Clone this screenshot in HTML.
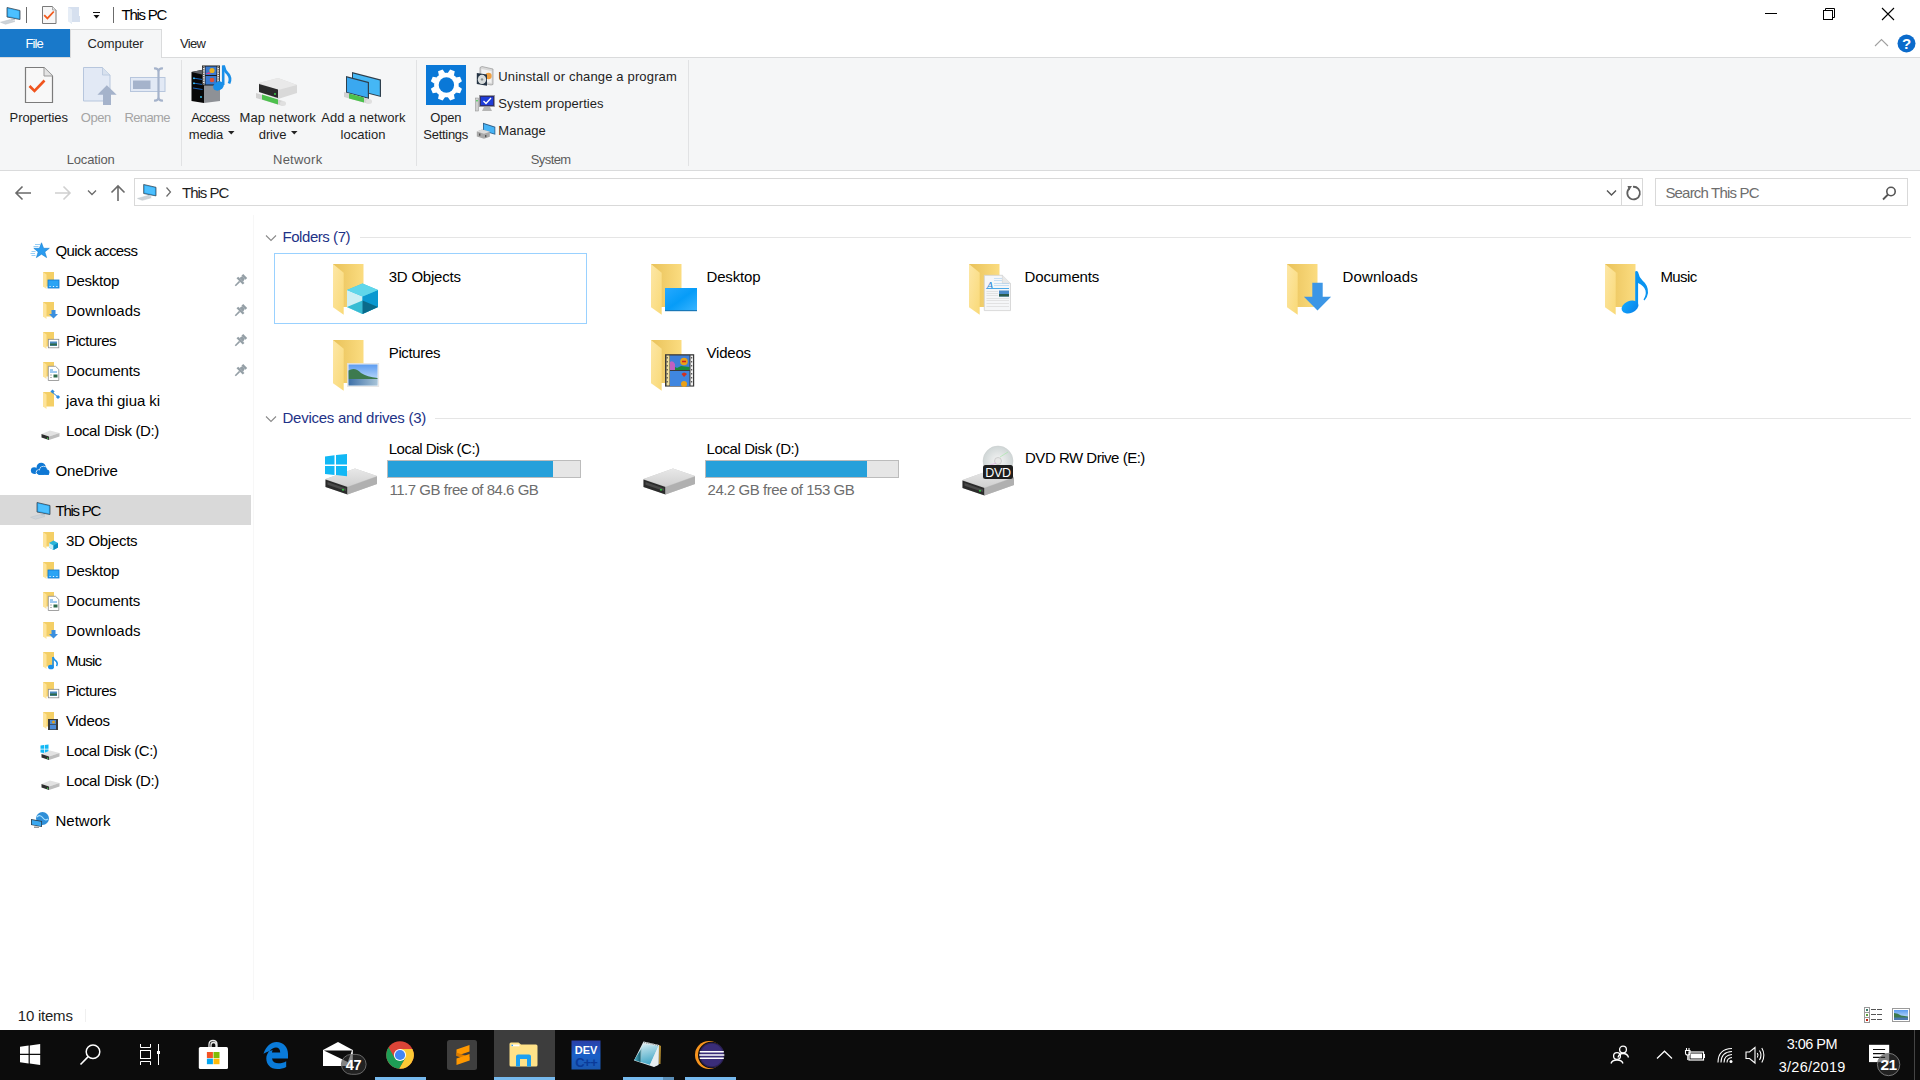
<!DOCTYPE html>
<html><head><meta charset="utf-8">
<style>
*{margin:0;padding:0;box-sizing:border-box}
html,body{width:1920px;height:1080px;overflow:hidden;background:#fff;font-family:"Liberation Sans",sans-serif;color:#000;position:relative}
.a{position:absolute}
.t{position:absolute;white-space:nowrap;line-height:1.15;font-family:"Liberation Sans",sans-serif}
svg{position:absolute;overflow:visible}
</style></head><body>
<svg style="left:0px;top:7px" width="22" height="20" viewBox="0 0 22 20"><g transform="scale(1.0)">
<polygon points="7,0.5 20,3.5 20,12.5 7,10" fill="#2aa7f0" stroke="#3d4a55" stroke-width="0.8"/>
<polygon points="8.2,1.8 18.8,4.3 18.8,11.3 8.2,9" fill="#4cc0ff"/>
<polygon points="11,11.5 15,12.2 15,13.5 11,12.8" fill="#b9c3cc"/>
<polygon points="0.5,15.2 10,12.6 15,14.5 5.5,17.2" fill="#cdd3d8" stroke="#bcc3c8" stroke-width="0.5"/>
</g></svg>
<div class="a" style="left:26px;top:7px;width:1px;height:16px;background:#6b6b6b"></div>
<svg style="left:42px;top:6px" width="15" height="18" viewBox="0 0 15 18"><path d="M0.5,0.5 H10.5 L14,4 V17.5 H0.5 Z" fill="#f7f7f7" stroke="#7a7a7a" stroke-width="1"/>
<path d="M10.5,0.5 V4 H14" fill="#e6e6e6" stroke="#9a9a9a" stroke-width="0.8"/>
<path d="M2.2,9.2 L5.4,12.4 L11.8,5.5" fill="none" stroke="#f25a1d" stroke-width="1.8"/></svg>
<svg style="left:68px;top:7px" width="13" height="18" viewBox="0 0 13 18"><polygon points="0,0 11,0 11,9 12,9 12,15 4,15 4,17 0,14" fill="#d6e0ef"/>
<polygon points="0,0 4,2.5 4,17 0,14" fill="#e6edf6"/></svg>
<div class="a" style="left:93px;top:12px;width:7px;height:1px;background:#111"></div>
<svg style="left:93px;top:15px" width="7" height="5" viewBox="0 0 7 5"><polygon points="0.5,0 6.5,0 3.5,3.5" fill="#111"/></svg>
<div class="a" style="left:113px;top:7px;width:1px;height:16px;background:#6b6b6b"></div>
<div class="t" style="left:121.50px;top:6.00px;font-size:15px;color:#000;letter-spacing:-1.250px;">This PC</div>
<div class="a" style="left:1765px;top:13px;width:12px;height:1px;background:#000"></div>
<svg style="left:1822px;top:7px" width="14" height="14" viewBox="0 0 14 14"><rect x="1.5" y="3.5" width="9" height="9" fill="none" stroke="#000" stroke-width="1"/><path d="M3.5,3.5 V1.5 H12.5 V10.5 H10.5" fill="none" stroke="#000" stroke-width="1"/></svg>
<svg style="left:1881px;top:7px" width="14" height="14" viewBox="0 0 14 14"><path d="M1,1 L13,13 M13,1 L1,13" stroke="#000" stroke-width="1.1"/></svg>
<div class="a" style="left:0px;top:29px;width:70px;height:28px;background:#1979ca"></div>
<div class="t" style="left:25.60px;top:37.00px;font-size:13px;color:#fff;letter-spacing:-0.933px;">File</div>
<div class="a" style="left:70px;top:29px;width:92px;height:29px;background:#f5f6f7;border:1px solid #dadbdc;border-bottom:none"></div>
<div class="t" style="left:87.50px;top:37.00px;font-size:13px;color:#262626;letter-spacing:-0.129px;">Computer</div>
<div class="t" style="left:180.00px;top:37.00px;font-size:13px;color:#262626;letter-spacing:-0.700px;">View</div>
<svg style="left:1874px;top:38px" width="15" height="9" viewBox="0 0 15 9"><path d="M1,8 L7.5,1.5 L14,8" fill="none" stroke="#a0a0a0" stroke-width="1.1"/></svg>
<svg style="left:1897px;top:34px" width="19" height="19" viewBox="0 0 19 19"><circle cx="9.5" cy="9.5" r="9" fill="#0b6bcb"/><text x="9.7" y="15.2" font-family="Liberation Sans" font-weight="bold" font-size="15" fill="#fff" text-anchor="middle">?</text></svg>
<div class="a" style="left:0px;top:57px;width:1920px;height:114px;background:#f5f6f7;border-top:1px solid #dadbdc;border-bottom:1px solid #dadbdc"></div>
<div class="a" style="left:71px;top:57px;width:90px;height:2px;background:#f5f6f7"></div>
<div class="a" style="left:181px;top:60px;width:1px;height:106px;background:#e1e2e4"></div>
<div class="a" style="left:416px;top:60px;width:1px;height:106px;background:#e1e2e4"></div>
<div class="a" style="left:688px;top:60px;width:1px;height:106px;background:#e1e2e4"></div>
<svg style="left:24px;top:66px" width="30" height="38" viewBox="0 0 30 38"><path d="M1.5,1.5 H20 L28.5,10 V36.5 H1.5 Z" fill="#f8f8f8" stroke="#7b7b7b" stroke-width="1.2"/>
<path d="M20,1.5 V10 H28.5" fill="#e4e4e4" stroke="#9b9b9b" stroke-width="1"/>
<path d="M5.5,20 L10.5,25 L20.5,14.5" fill="none" stroke="#f0541e" stroke-width="2.6"/></svg>
<svg style="left:82px;top:66px" width="36" height="40" viewBox="0 0 36 40"><path d="M1.5,1.5 H20.5 L28,9 V35 H1.5 Z" fill="#e2e9f5" stroke="#b7c6dd" stroke-width="1"/>
<path d="M20.5,1.5 V9 H28" fill="#d8e1ee" stroke="#b7c6dd" stroke-width="0.8"/>
<polygon points="24.8,19.3 34.7,28.8 29,28.8 29,38.9 21,38.9 21,28.8 15.4,28.8" fill="#a5b3cb"/></svg>
<svg style="left:129px;top:67px" width="38" height="36" viewBox="0 0 38 36"><rect x="1.5" y="10.5" width="34.5" height="14" fill="#e2e9f5" stroke="#b7c6dd" stroke-width="1"/>
<rect x="4" y="13.5" width="17.5" height="8.5" fill="#a5b3cb"/>
<path d="M25,1.5 Q29.5,1 29.5,5 V30 Q29.5,34 25,33.5 M34,1.5 Q29.5,1 29.5,5 M34,33.5 Q29.5,34 29.5,30" fill="none" stroke="#a5b3cb" stroke-width="2.2"/></svg>
<div class="t" style="left:9.60px;top:111.00px;font-size:13px;color:#1e1e1e;letter-spacing:-0.100px;">Properties</div>
<div class="t" style="left:80.70px;top:111.00px;font-size:13px;color:#a4a4a4;letter-spacing:-0.400px;">Open</div>
<div class="t" style="left:124.50px;top:111.00px;font-size:13px;color:#a4a4a4;letter-spacing:-0.640px;">Rename</div>
<div class="t" style="left:66.70px;top:153.00px;font-size:13px;color:#5c5c5c;letter-spacing:-0.157px;">Location</div>
<svg style="left:190px;top:64px" width="42" height="42" viewBox="0 0 42 42"><polygon points="1.5,8 14,5.5 14,39 1.5,37" fill="#080808"/>
<polygon points="14,5.5 30,9 30,37 14,39" fill="#8e9196"/>
<polygon points="1.5,8 14,5.5 30,9 16,11.5" fill="#5e6166"/>
<path d="M3,14 L12.5,15.5 M3,19 L12.5,20.5 M3,24 L12.5,25.5" stroke="#1d6fd0" stroke-width="0.9"/>
<circle cx="4" cy="14.3" r="0.9" fill="#3fd0ff"/><circle cx="4" cy="19.3" r="0.9" fill="#3fd0ff"/><circle cx="11" cy="33" r="0.9" fill="#3fd0ff"/>
<rect x="12" y="1.5" width="18" height="20" fill="#1a1a1a"/>
<rect x="12.8" y="2.5" width="2" height="18" fill="#e8e8e8"/><rect x="27.2" y="2.5" width="2" height="18" fill="#e8e8e8"/>
<path d="M13.8,3 V20.5 M28.2,3 V20.5" stroke="#1a1a1a" stroke-width="1" stroke-dasharray="1 1.3"/>
<rect x="15.5" y="2.5" width="11" height="8.5" fill="#3a7ad0"/><rect x="15.5" y="12" width="11" height="8.5" fill="#3a7ad0"/>
<circle cx="22" cy="6.5" r="2.6" fill="#e8b020"/><circle cx="22" cy="16" r="2.3" fill="#e05030"/><path d="M15.5,10 L19,8 L21,10" fill="#d04090"/>
<path d="M33.2,1.5 V21" stroke="#1a8fe8" stroke-width="2.6"/>
<path d="M33.5,1.5 Q34.5,7 38,10 Q41.5,14 39,19.5" fill="none" stroke="#1a8fe8" stroke-width="2.8"/>
<ellipse cx="28.5" cy="22" rx="5.6" ry="4.3" fill="#1a8fe8" transform="rotate(-28 28.5 22)"/></svg>
<svg style="left:256px;top:76px" width="44" height="30" viewBox="0 0 44 30"><polygon points="3,7 22,2 41,9 41,17 22,23 3,16" fill="#d9d9d9"/>
<polygon points="3,7 22,2 41,9 22,14" fill="#e9e9e9"/>
<polygon points="3,8 22,13.5 22,22 3,16" fill="#2a2a2a"/>
<circle cx="19" cy="18" r="1" fill="#3cd04a"/>
<polygon points="0,17 27,25 27,30 0,22" fill="#d2d2d2"/>
<polygon points="6,18.5 22,23.5 22,28.5 6,23.5" fill="#4dc04d"/>
<ellipse cx="27" cy="27.5" rx="3" ry="2.5" fill="#e0e0e0"/></svg>
<svg style="left:344px;top:72px" width="40" height="34" viewBox="0 0 40 34"><polygon points="8,0 37,7.5 37,25 8,17.5" fill="#2e3f4d"/>
<polygon points="9,1.5 35.8,8.5 35.8,23.8 9,16.8" fill="#45b7f5"/>
<polygon points="2,4 25,10 25,27 2,21" fill="#2e3f4d"/>
<polygon points="3,5.5 23.8,11 23.8,25.6 3,20" fill="#3aa8f0"/>
<polygon points="0,20 25,27 25,32 0,25" fill="#d2d2d2"/>
<polygon points="5,21.5 20,25.5 20,30.5 5,26.5" fill="#4dc04d"/>
<ellipse cx="25" cy="29.5" rx="3" ry="2.5" fill="#e0e0e0"/></svg>
<div class="t" style="left:191.30px;top:111.00px;font-size:13px;color:#1e1e1e;letter-spacing:-0.640px;">Access</div>
<div class="t" style="left:188.80px;top:128.00px;font-size:13px;color:#1e1e1e;letter-spacing:-0.250px;">media</div>
<svg style="left:228px;top:131px" width="7" height="4" viewBox="0 0 7 4"><polygon points="0,0 6.5,0 3.25,3.5" fill="#222"/></svg>
<div class="t" style="left:239.40px;top:111.00px;font-size:13px;color:#1e1e1e;letter-spacing:0.190px;">Map network</div>
<div class="t" style="left:258.80px;top:128.00px;font-size:13px;color:#1e1e1e;letter-spacing:-0.125px;">drive</div>
<svg style="left:290.5px;top:131px" width="7" height="4" viewBox="0 0 7 4"><polygon points="0,0 6.5,0 3.25,3.5" fill="#222"/></svg>
<div class="t" style="left:321.30px;top:111.00px;font-size:13px;color:#1e1e1e;letter-spacing:0.083px;">Add a network</div>
<div class="t" style="left:340.60px;top:128.00px;font-size:13px;color:#1e1e1e;letter-spacing:0.000px;">location</div>
<div class="t" style="left:273.00px;top:153.00px;font-size:13px;color:#5c5c5c;letter-spacing:0.250px;">Network</div>
<svg style="left:425.5px;top:65px" width="40" height="40" viewBox="0 0 40 40"><rect width="40" height="40" fill="#0a78d7"/>
<g transform="translate(20.4 20)" fill="#fff"><circle r="12.3"/><polygon points="-3.3,-11.5 3.3,-11.5 2.5,-15.8 -2.5,-15.8" transform="rotate(22.5)"/><polygon points="-3.3,-11.5 3.3,-11.5 2.5,-15.8 -2.5,-15.8" transform="rotate(67.5)"/><polygon points="-3.3,-11.5 3.3,-11.5 2.5,-15.8 -2.5,-15.8" transform="rotate(112.5)"/><polygon points="-3.3,-11.5 3.3,-11.5 2.5,-15.8 -2.5,-15.8" transform="rotate(157.5)"/><polygon points="-3.3,-11.5 3.3,-11.5 2.5,-15.8 -2.5,-15.8" transform="rotate(202.5)"/><polygon points="-3.3,-11.5 3.3,-11.5 2.5,-15.8 -2.5,-15.8" transform="rotate(247.5)"/><polygon points="-3.3,-11.5 3.3,-11.5 2.5,-15.8 -2.5,-15.8" transform="rotate(292.5)"/><polygon points="-3.3,-11.5 3.3,-11.5 2.5,-15.8 -2.5,-15.8" transform="rotate(337.5)"/><circle r="7.7" fill="#0a78d7"/></g></svg>
<div class="t" style="left:430.30px;top:111.00px;font-size:13px;color:#1e1e1e;letter-spacing:-0.200px;">Open</div>
<div class="t" style="left:423.30px;top:128.00px;font-size:13px;color:#1e1e1e;letter-spacing:-0.286px;">Settings</div>
<svg style="left:476px;top:66px" width="18" height="21" viewBox="0 0 18 21"><polygon points="4,1.5 6,0.5 17,3 17,18.5 15,19 4,16.5" fill="#d8d8d8" stroke="#8a8a8a" stroke-width="0.6"/>
<polygon points="5.5,3 15.5,5 15.5,17 5.5,15" fill="#f2f2f2"/>
<circle cx="12.5" cy="10" r="3.2" fill="#f0a040"/>
<polygon points="0.8,7 11,8.5 11,19.8 0.8,18" fill="#253444"/>
<ellipse cx="6" cy="13.4" rx="4.2" ry="4.6" fill="#d8dcdc"/><circle cx="6" cy="13.4" r="1.2" fill="#8a9090"/></svg>
<div class="t" style="left:498.30px;top:70.00px;font-size:13px;color:#1e1e1e;letter-spacing:0.157px;">Uninstall or change a program</div>
<svg style="left:475px;top:95px" width="21" height="18" viewBox="0 0 21 18"><rect x="4.5" y="0.5" width="15" height="11" fill="#2d2d6e" stroke="#9a9a9a" stroke-width="0.8"/>
<rect x="6" y="2" width="12" height="8" fill="#1e3cd8"/>
<path d="M8.5,6 L11,8.5 L16,3" fill="none" stroke="#fff" stroke-width="1.3"/>
<polygon points="9,12 15,12 17,16 7,16" fill="#b5b5b5"/>
<rect x="0.5" y="3" width="3" height="13" fill="#d0d0d0" stroke="#8a8a8a" stroke-width="0.5"/>
<rect x="1.3" y="5" width="1.4" height="1.4" fill="#3ad04a"/></svg>
<div class="t" style="left:498.30px;top:97.00px;font-size:13px;color:#1e1e1e;letter-spacing:0.025px;">System properties</div>
<svg style="left:475.5px;top:122px" width="20" height="18" viewBox="0 0 20 18"><polygon points="7,0.8 19.3,4.8 19.3,12.8 7,9" fill="#2f5f88"/>
<polygon points="7.8,2 18.5,5.5 18.5,11.8 7.8,8.3" fill="#46b4f6"/>
<polygon points="0.8,9.5 6,7.5 13.8,9.8 13.8,14.8 8,16.7 0.8,14.5" fill="#a8a8a8"/>
<polygon points="0.8,9.5 6,7.5 13.8,9.8 8,11.8" fill="#dcdcdc"/>
<rect x="3" y="11.5" width="1.4" height="2.2" fill="#555"/><rect x="9" y="13" width="1.4" height="2.2" fill="#555"/></svg>
<div class="t" style="left:498.30px;top:124.00px;font-size:13px;color:#1e1e1e;letter-spacing:0.100px;">Manage</div>
<div class="t" style="left:530.80px;top:153.00px;font-size:13px;color:#5c5c5c;letter-spacing:-0.600px;">System</div>
<svg style="left:14px;top:185px" width="20" height="16" viewBox="0 0 20 16"><path d="M2,8 H17 M8.5,1.5 L2,8 L8.5,14.5" fill="none" stroke="#6a6a6a" stroke-width="1.6"/></svg>
<svg style="left:53px;top:185px" width="20" height="16" viewBox="0 0 20 16"><path d="M2,8 H17 M10.5,1.5 L17,8 L10.5,14.5" fill="none" stroke="#d0d0d0" stroke-width="1.6"/></svg>
<svg style="left:87px;top:189px" width="11" height="8" viewBox="0 0 11 8"><path d="M1,1.5 L5,5.5 L9,1.5" fill="none" stroke="#6a6a6a" stroke-width="1.3"/></svg>
<svg style="left:110px;top:184px" width="16" height="18" viewBox="0 0 16 18"><path d="M8,17 V2 M1.5,8.5 L8,2 L14.5,8.5" fill="none" stroke="#6a6a6a" stroke-width="1.6"/></svg>
<div class="a" style="left:134px;top:178px;width:1509px;height:28px;border:1px solid #d9d9d9;background:#fff"></div>
<div class="a" style="left:1621px;top:178px;width:1px;height:28px;background:#d9d9d9"></div>
<svg style="left:1606px;top:189px" width="12" height="8" viewBox="0 0 12 8"><path d="M1,1.5 L5.5,6 L10,1.5" fill="none" stroke="#555" stroke-width="1.4"/></svg>
<svg style="left:1625px;top:185px" width="16" height="16" viewBox="0 0 16 16"><path d="M4.6,3.2 A6.3,6.3 0 1 0 8,1.8" fill="none" stroke="#606060" stroke-width="1.8"/><polygon points="2.5,1 7,1 4,5.5" fill="#606060"/></svg>
<svg style="left:137px;top:184px" width="22" height="20" viewBox="0 0 22 20"><g transform="scale(0.95)">
<polygon points="7,0.5 20,3.5 20,12.5 7,10" fill="#2aa7f0" stroke="#3d4a55" stroke-width="0.8"/>
<polygon points="8.2,1.8 18.8,4.3 18.8,11.3 8.2,9" fill="#4cc0ff"/>
<polygon points="11,11.5 15,12.2 15,13.5 11,12.8" fill="#b9c3cc"/>
<polygon points="0.5,15.2 10,12.6 15,14.5 5.5,17.2" fill="#cdd3d8" stroke="#bcc3c8" stroke-width="0.5"/>
</g></svg>
<svg style="left:165px;top:186px" width="7" height="12" viewBox="0 0 7 12"><path d="M1.5,1.5 L5.5,6 L1.5,10.5" fill="none" stroke="#6a6a6a" stroke-width="1.2"/></svg>
<div class="t" style="left:182.00px;top:184.00px;font-size:15px;color:#1e1e1e;letter-spacing:-1.000px;">This PC</div>
<div class="a" style="left:1655px;top:178px;width:253px;height:28px;border:1px solid #d9d9d9;background:#fff"></div>
<div class="t" style="left:1665.40px;top:184.00px;font-size:15px;color:#6d6d6d;letter-spacing:-0.815px;">Search This PC</div>
<svg style="left:1882px;top:186px" width="15" height="14" viewBox="0 0 15 14"><circle cx="9" cy="5.5" r="4.2" fill="none" stroke="#555" stroke-width="1.6"/><path d="M6,8.5 L1,13.5" stroke="#555" stroke-width="1.8"/></svg>
<div class="a" style="left:253px;top:215px;width:1px;height:785px;background:#f7f7f7"></div>
<div class="a" style="left:0px;top:495px;width:251px;height:30px;background:#d9d9d9"></div>
<svg style="left:30px;top:242px" width="20" height="17" viewBox="0 0 20 17"><polygon points="11.5,0.8 13.6,6.3 19.3,6.3 14.8,9.9 16.6,15.6 11.5,12.2 6.4,15.6 8.2,9.9 3.8,6.3 9.4,6.3" fill="#2a9cf0" stroke="#1a80d0" stroke-width="0.6" stroke-linejoin="round"/>
<path d="M5,2.5 H10 M3.5,4.5 H8.5 M1.5,9.5 H5.5 M0.5,11.5 H5 M1.5,13.5 H5.5" stroke="#7cc2f2" stroke-width="0.8"/></svg>
<div class="t" style="left:55.50px;top:242.00px;font-size:15px;color:#000;letter-spacing:-0.609px;">Quick access</div>
<svg style="left:43px;top:272px" width="18" height="18" viewBox="0 0 18 18"><rect x="0" y="0" width="11" height="14.5" fill="#f4cf66"/>
<polygon points="0,0 3.5,2.5 3.5,17 0,14.5" fill="#fde39a"/><rect x="5" y="8" width="11" height="8" fill="#2aa4f5" stroke="#1177cc" stroke-width="0.8"/><path d="M6.5,14.5 H14.5" stroke="#fff" stroke-width="0.9" stroke-dasharray="1.2 2.2"/></svg>
<div class="t" style="left:65.90px;top:272.00px;font-size:15px;color:#000;letter-spacing:-0.267px;">Desktop</div>
<svg style="left:0;top:0" width="1" height="1"><g transform="translate(245.2,275.9) rotate(45)" fill="#949fa6"><polygon points="-2.8,0 2.8,0 2.8,2.5 -2.8,2.5"/><polygon points="-1.9,2.5 1.9,2.5 2.6,5.6 -2.6,5.6"/><polygon points="-4.4,5.5 4.4,5.5 4.4,7.9 -4.4,7.9"/><rect x="-0.8" y="7.8" width="1.6" height="6.2"/></g></svg>
<svg style="left:43px;top:302px" width="18" height="18" viewBox="0 0 18 18"><rect x="0" y="0" width="11" height="14.5" fill="#f4cf66"/>
<polygon points="0,0 3.5,2.5 3.5,17 0,14.5" fill="#fde39a"/><polygon points="8.5,8 12.5,8 12.5,12 15,12 10.5,16.5 6,12 8.5,12" fill="#3a8fdf"/></svg>
<div class="t" style="left:65.90px;top:302.00px;font-size:15px;color:#000;letter-spacing:0.062px;">Downloads</div>
<svg style="left:0;top:0" width="1" height="1"><g transform="translate(245.2,305.9) rotate(45)" fill="#949fa6"><polygon points="-2.8,0 2.8,0 2.8,2.5 -2.8,2.5"/><polygon points="-1.9,2.5 1.9,2.5 2.6,5.6 -2.6,5.6"/><polygon points="-4.4,5.5 4.4,5.5 4.4,7.9 -4.4,7.9"/><rect x="-0.8" y="7.8" width="1.6" height="6.2"/></g></svg>
<svg style="left:43px;top:332px" width="18" height="18" viewBox="0 0 18 18"><rect x="0" y="0" width="11" height="14.5" fill="#f4cf66"/>
<polygon points="0,0 3.5,2.5 3.5,17 0,14.5" fill="#fde39a"/><rect x="5.3" y="7.3" width="10.5" height="8.5" fill="#fff" stroke="#8a8a8a" stroke-width="0.8"/><rect x="7" y="9.5" width="7" height="4.5" fill="#4c8ac0"/><rect x="7" y="11.5" width="7" height="2" fill="#2e6a4a"/></svg>
<div class="t" style="left:65.90px;top:332.00px;font-size:15px;color:#000;letter-spacing:-0.500px;">Pictures</div>
<svg style="left:0;top:0" width="1" height="1"><g transform="translate(245.2,335.9) rotate(45)" fill="#949fa6"><polygon points="-2.8,0 2.8,0 2.8,2.5 -2.8,2.5"/><polygon points="-1.9,2.5 1.9,2.5 2.6,5.6 -2.6,5.6"/><polygon points="-4.4,5.5 4.4,5.5 4.4,7.9 -4.4,7.9"/><rect x="-0.8" y="7.8" width="1.6" height="6.2"/></g></svg>
<svg style="left:43px;top:362px" width="18" height="18" viewBox="0 0 18 18"><rect x="0" y="0" width="11" height="14.5" fill="#f4cf66"/>
<polygon points="0,0 3.5,2.5 3.5,17 0,14.5" fill="#fde39a"/><path d="M5.3,4.3 H12.5 L15.8,7.5 V18.5 H5.3 Z" fill="#fff" stroke="#8a8a8a" stroke-width="0.8"/><path d="M7,10 H14 M7,8 H10" stroke="#2a8ae0" stroke-width="0.9"/><path d="M7,13 H9 M7,15.5 H9" stroke="#999" stroke-width="0.7"/><rect x="10.5" y="12.5" width="4" height="3" fill="#2e6a4a"/></svg>
<div class="t" style="left:65.90px;top:362.00px;font-size:15px;color:#000;letter-spacing:-0.188px;">Documents</div>
<svg style="left:0;top:0" width="1" height="1"><g transform="translate(245.2,365.9) rotate(45)" fill="#949fa6"><polygon points="-2.8,0 2.8,0 2.8,2.5 -2.8,2.5"/><polygon points="-1.9,2.5 1.9,2.5 2.6,5.6 -2.6,5.6"/><polygon points="-4.4,5.5 4.4,5.5 4.4,7.9 -4.4,7.9"/><rect x="-0.8" y="7.8" width="1.6" height="6.2"/></g></svg>
<svg style="left:43px;top:392px" width="18" height="18" viewBox="0 0 18 18"><rect x="0" y="0" width="11" height="14.5" fill="#f4cf66"/>
<polygon points="0,0 3.5,2.5 3.5,17 0,14.5" fill="#fde39a"/><g fill="#2a8ae0"><rect x="8" y="-2" width="3" height="3" transform="rotate(45 9.5 -0.5)"/><rect x="13.5" y="3.5" width="3" height="3" transform="rotate(45 15 5)"/><path d="M9,0 L15,5" stroke="#2a8ae0" stroke-width="1"/></g></svg>
<div class="t" style="left:66.00px;top:392.00px;font-size:15px;color:#000;letter-spacing:-0.067px;">java thi giua ki</div>
<svg style="left:40.5px;top:429.5px" width="19" height="11" viewBox="0 0 19 11"><polygon points="0.5,4 9,0.5 18.5,3 8,6.5" fill="#e2e2e2"/>
<polygon points="0.5,4 8,6.5 8,10 0.5,7.5" fill="#2e2e2e"/>
<polygon points="8,6.5 18.5,3 18.5,6.5 8,10" fill="#bdbdbd"/><circle cx="6.6" cy="8.2" r="0.7" fill="#3cd04a"/></svg>
<div class="t" style="left:66.00px;top:422.00px;font-size:15px;color:#000;letter-spacing:-0.357px;">Local Disk (D:)</div>
<svg style="left:30px;top:462px" width="20" height="14" viewBox="0 0 20 14"><g fill="#0f78d4"><circle cx="11.2" cy="5.3" r="4.6"/><circle cx="4.2" cy="8.6" r="3.3"/><rect x="4" y="7" width="9" height="4.6"/>
<circle cx="13.5" cy="8.2" r="3.9" stroke="#fff" stroke-width="0.9"/><circle cx="16.8" cy="10.2" r="2.6"/><circle cx="8.6" cy="10.3" r="2.4" stroke="#fff" stroke-width="0.9"/><rect x="8.5" y="9" width="10.5" height="3.8"/>
<circle cx="13.5" cy="8.2" r="3.45"/><circle cx="8.6" cy="10.3" r="1.95"/><rect x="8.6" y="8.6" width="6" height="4.2"/></g></svg>
<div class="t" style="left:55.50px;top:462.00px;font-size:15px;color:#000;letter-spacing:-0.143px;">OneDrive</div>
<svg style="left:30px;top:502px" width="22" height="20" viewBox="0 0 22 20"><g transform="scale(1.0)">
<polygon points="7,0.5 20,3.5 20,12.5 7,10" fill="#2aa7f0" stroke="#3d4a55" stroke-width="0.8"/>
<polygon points="8.2,1.8 18.8,4.3 18.8,11.3 8.2,9" fill="#4cc0ff"/>
<polygon points="11,11.5 15,12.2 15,13.5 11,12.8" fill="#b9c3cc"/>
<polygon points="0.5,15.2 10,12.6 15,14.5 5.5,17.2" fill="#cdd3d8" stroke="#bcc3c8" stroke-width="0.5"/>
</g></svg>
<div class="t" style="left:55.50px;top:502.00px;font-size:15px;color:#000;letter-spacing:-1.250px;">This PC</div>
<svg style="left:43px;top:532px" width="18" height="18" viewBox="0 0 18 18"><rect x="0" y="0" width="11" height="14.5" fill="#f4cf66"/>
<polygon points="0,0 3.5,2.5 3.5,17 0,14.5" fill="#fde39a"/><polygon points="6,11 10.5,8.5 15,11 15,15.5 10.5,18 6,15.5" fill="#2bb5d8"/><polygon points="6,11 10.5,13.5 10.5,18 6,15.5" fill="#c8eef5"/><polygon points="10.5,13.5 15,11 15,15.5 10.5,18" fill="#0a8cc0"/></svg>
<div class="t" style="left:65.90px;top:532.00px;font-size:15px;color:#000;letter-spacing:-0.278px;">3D Objects</div>
<svg style="left:43px;top:562px" width="18" height="18" viewBox="0 0 18 18"><rect x="0" y="0" width="11" height="14.5" fill="#f4cf66"/>
<polygon points="0,0 3.5,2.5 3.5,17 0,14.5" fill="#fde39a"/><rect x="5" y="8" width="11" height="8" fill="#2aa4f5" stroke="#1177cc" stroke-width="0.8"/><path d="M6.5,14.5 H14.5" stroke="#fff" stroke-width="0.9" stroke-dasharray="1.2 2.2"/></svg>
<div class="t" style="left:65.90px;top:562.00px;font-size:15px;color:#000;letter-spacing:-0.267px;">Desktop</div>
<svg style="left:43px;top:592px" width="18" height="18" viewBox="0 0 18 18"><rect x="0" y="0" width="11" height="14.5" fill="#f4cf66"/>
<polygon points="0,0 3.5,2.5 3.5,17 0,14.5" fill="#fde39a"/><path d="M5.3,4.3 H12.5 L15.8,7.5 V18.5 H5.3 Z" fill="#fff" stroke="#8a8a8a" stroke-width="0.8"/><path d="M7,10 H14 M7,8 H10" stroke="#2a8ae0" stroke-width="0.9"/><path d="M7,13 H9 M7,15.5 H9" stroke="#999" stroke-width="0.7"/><rect x="10.5" y="12.5" width="4" height="3" fill="#2e6a4a"/></svg>
<div class="t" style="left:65.90px;top:592.00px;font-size:15px;color:#000;letter-spacing:-0.188px;">Documents</div>
<svg style="left:43px;top:622px" width="18" height="18" viewBox="0 0 18 18"><rect x="0" y="0" width="11" height="14.5" fill="#f4cf66"/>
<polygon points="0,0 3.5,2.5 3.5,17 0,14.5" fill="#fde39a"/><polygon points="8.5,8 12.5,8 12.5,12 15,12 10.5,16.5 6,12 8.5,12" fill="#3a8fdf"/></svg>
<div class="t" style="left:65.90px;top:622.00px;font-size:15px;color:#000;letter-spacing:0.062px;">Downloads</div>
<svg style="left:43px;top:652px" width="18" height="18" viewBox="0 0 18 18"><rect x="0" y="0" width="11" height="14.5" fill="#f4cf66"/>
<polygon points="0,0 3.5,2.5 3.5,17 0,14.5" fill="#fde39a"/><path d="M10,5 V14" stroke="#1a8fe8" stroke-width="1.6"/><path d="M10,5 Q11,8 13.5,9.5 Q15,12 13.5,14" fill="none" stroke="#1a8fe8" stroke-width="1.5"/><ellipse cx="8" cy="15" rx="3" ry="2.3" fill="#1a8fe8"/></svg>
<div class="t" style="left:65.90px;top:652.00px;font-size:15px;color:#000;letter-spacing:-0.750px;">Music</div>
<svg style="left:43px;top:682px" width="18" height="18" viewBox="0 0 18 18"><rect x="0" y="0" width="11" height="14.5" fill="#f4cf66"/>
<polygon points="0,0 3.5,2.5 3.5,17 0,14.5" fill="#fde39a"/><rect x="5.3" y="7.3" width="10.5" height="8.5" fill="#fff" stroke="#8a8a8a" stroke-width="0.8"/><rect x="7" y="9.5" width="7" height="4.5" fill="#4c8ac0"/><rect x="7" y="11.5" width="7" height="2" fill="#2e6a4a"/></svg>
<div class="t" style="left:65.90px;top:682.00px;font-size:15px;color:#000;letter-spacing:-0.500px;">Pictures</div>
<svg style="left:43px;top:712px" width="18" height="18" viewBox="0 0 18 18"><rect x="0" y="0" width="11" height="14.5" fill="#f4cf66"/>
<polygon points="0,0 3.5,2.5 3.5,17 0,14.5" fill="#fde39a"/><rect x="5" y="7" width="10" height="11" fill="#3a3a3a"/><rect x="7" y="8" width="6" height="4.3" fill="#4a8ad8"/><rect x="7" y="13" width="6" height="4.3" fill="#4a8ad8"/><circle cx="10.5" cy="10" r="1.5" fill="#e0a020"/></svg>
<div class="t" style="left:65.90px;top:712.00px;font-size:15px;color:#000;letter-spacing:-0.300px;">Videos</div>
<svg style="left:40.5px;top:749.5px" width="19" height="11" viewBox="0 0 19 11"><g fill="#12b8f5"><polygon points="-0.5,-4.6 3,-5 3,-1.2 -0.5,-1.2"/><polygon points="3.7,-5.1 7.5,-5.6 7.5,-1.2 3.7,-1.2"/><polygon points="-0.5,-0.5 3,-0.5 3,3 -0.5,2.6"/><polygon points="3.7,-0.5 7.5,-0.5 7.5,3.6 3.7,3.1"/></g><polygon points="0.5,4 9,0.5 18.5,3 8,6.5" fill="#e2e2e2"/>
<polygon points="0.5,4 8,6.5 8,10 0.5,7.5" fill="#2e2e2e"/>
<polygon points="8,6.5 18.5,3 18.5,6.5 8,10" fill="#bdbdbd"/><circle cx="6.6" cy="8.2" r="0.7" fill="#3cd04a"/></svg>
<div class="t" style="left:66.00px;top:742.00px;font-size:15px;color:#000;letter-spacing:-0.464px;">Local Disk (C:)</div>
<svg style="left:40.5px;top:779.5px" width="19" height="11" viewBox="0 0 19 11"><polygon points="0.5,4 9,0.5 18.5,3 8,6.5" fill="#e2e2e2"/>
<polygon points="0.5,4 8,6.5 8,10 0.5,7.5" fill="#2e2e2e"/>
<polygon points="8,6.5 18.5,3 18.5,6.5 8,10" fill="#bdbdbd"/><circle cx="6.6" cy="8.2" r="0.7" fill="#3cd04a"/></svg>
<div class="t" style="left:66.00px;top:772.00px;font-size:15px;color:#000;letter-spacing:-0.357px;">Local Disk (D:)</div>
<svg style="left:30px;top:811px" width="20" height="18" viewBox="0 0 20 18"><circle cx="12.5" cy="7.5" r="6.5" fill="#2f8fd8"/><path d="M7,6 Q10,3 13,7 Q15,10 18,8" fill="none" stroke="#a8e0ff" stroke-width="1.2"/>
<polygon points="1,8 12,10 12,16 1,14" fill="#2e3f4d"/><polygon points="1.8,9 11.2,10.8 11.2,15.2 1.8,13.4" fill="#3aa8f0"/><rect x="4" y="15.5" width="5" height="1.5" fill="#999"/></svg>
<div class="t" style="left:55.50px;top:812.00px;font-size:15px;color:#000;letter-spacing:0.000px;">Network</div>
<svg style="left:265px;top:233.9px" width="12" height="8" viewBox="0 0 12 8"><path d="M1,1.5 L6,6.5 L11,1.5" fill="none" stroke="#8a8a8a" stroke-width="1.1"/></svg>
<div class="t" style="left:282.50px;top:228.00px;font-size:15px;color:#1e3287;letter-spacing:-0.450px;">Folders (7)</div>
<div class="a" style="left:360px;top:237px;width:1551px;height:1px;background:#e5e5e5"></div>
<div class="a" style="left:274px;top:253px;width:313px;height:71px;border:1px solid #99d1ff"></div>
<svg style="left:333px;top:264px" width="50" height="54" viewBox="0 0 50 54"><defs><linearGradient id="bk" x1="0" y1="0" x2="1" y2="0"><stop offset="0" stop-color="#e9c25a"/><stop offset="1" stop-color="#fbdc80"/></linearGradient>
<linearGradient id="fl" x1="0" y1="0" x2="1" y2="1"><stop offset="0" stop-color="#fde7a6"/><stop offset="1" stop-color="#f9d977"/></linearGradient></defs>
<rect x="0" y="0" width="30.5" height="43" fill="url(#bk)"/>
<polygon points="0,0 10.7,8.7 10.7,50.8 0,43.2" fill="url(#fl)"/><polygon points="14,26 29.5,19.5 45,26 45,43 29.5,50 14,43" fill="#3cc6e0"/>
<polygon points="14,26 29.5,32.5 29.5,50 14,43" fill="#cdeff4"/>
<polygon points="29.5,32.5 45,26 45,43 29.5,50" fill="#0a98d0"/>
<polygon points="14,26 29.5,19.5 45,26 29.5,32.5" fill="#5fd6ea"/>
<polygon points="14,43 29.5,36.5 29.5,50" fill="#36bcd4"/><polygon points="29.5,36.5 45,43 29.5,50" fill="#0a6a8a"/></svg>
<div class="t" style="left:388.75px;top:268.00px;font-size:15px;color:#000;letter-spacing:-0.222px;">3D Objects</div>
<svg style="left:651px;top:264px" width="50" height="54" viewBox="0 0 50 54"><defs><linearGradient id="bk" x1="0" y1="0" x2="1" y2="0"><stop offset="0" stop-color="#e9c25a"/><stop offset="1" stop-color="#fbdc80"/></linearGradient>
<linearGradient id="fl" x1="0" y1="0" x2="1" y2="1"><stop offset="0" stop-color="#fde7a6"/><stop offset="1" stop-color="#f9d977"/></linearGradient></defs>
<rect x="0" y="0" width="30.5" height="43" fill="url(#bk)"/>
<polygon points="0,0 10.7,8.7 10.7,50.8 0,43.2" fill="url(#fl)"/><defs><linearGradient id="dk" x1="0" y1="0" x2="1" y2="1"><stop offset="0" stop-color="#26a9ff"/><stop offset="0.5" stop-color="#069cf8"/><stop offset="1" stop-color="#3ab4ff"/></linearGradient></defs><rect x="14" y="24" width="32" height="23" fill="url(#dk)"/><rect x="14" y="46" width="32" height="1.2" fill="#1878b8"/></svg>
<div class="t" style="left:706.50px;top:268.00px;font-size:15px;color:#000;letter-spacing:-0.167px;">Desktop</div>
<svg style="left:969px;top:264px" width="50" height="54" viewBox="0 0 50 54"><defs><linearGradient id="bk" x1="0" y1="0" x2="1" y2="0"><stop offset="0" stop-color="#e9c25a"/><stop offset="1" stop-color="#fbdc80"/></linearGradient>
<linearGradient id="fl" x1="0" y1="0" x2="1" y2="1"><stop offset="0" stop-color="#fde7a6"/><stop offset="1" stop-color="#f9d977"/></linearGradient></defs>
<rect x="0" y="0" width="30.5" height="43" fill="url(#bk)"/>
<polygon points="0,0 10.7,8.7 10.7,50.8 0,43.2" fill="url(#fl)"/><path d="M15.3,11.3 H33.4 L41.5,19.4 V46.6 H15.3 Z" fill="#f5f6f8" stroke="#d0d0d0" stroke-width="0.8"/>
<path d="M33.4,11.3 V19.4 H41.5" fill="#e8e8e8" stroke="#cfcfcf" stroke-width="0.6"/>
<text x="17.5" y="24.5" font-family="Liberation Serif" font-style="italic" font-size="11" fill="#1f88d8">A</text>
<path d="M25,14.5 H33 M25,16.5 H33 M25,19.5 H40 M25,21.5 H40" stroke="#a8d0f0" stroke-width="0.6"/>
<path d="M17.5,24.5 H40" stroke="#4aa8e8" stroke-width="1"/>
<path d="M17.5,27.5 H29 M17.5,29.5 H29 M17.5,31.5 H29 M17.5,34.5 H40 M17.5,36.5 H40 M17.5,39.5 H40 M17.5,42.5 H40" stroke="#d5d5d5" stroke-width="0.6"/>
<rect x="30" y="26.5" width="10" height="6" fill="#4a8ac8"/><rect x="30" y="30" width="10" height="2.5" fill="#2a5a4a"/></svg>
<div class="t" style="left:1024.50px;top:268.00px;font-size:15px;color:#000;letter-spacing:-0.125px;">Documents</div>
<svg style="left:1287px;top:264px" width="50" height="54" viewBox="0 0 50 54"><defs><linearGradient id="bk" x1="0" y1="0" x2="1" y2="0"><stop offset="0" stop-color="#e9c25a"/><stop offset="1" stop-color="#fbdc80"/></linearGradient>
<linearGradient id="fl" x1="0" y1="0" x2="1" y2="1"><stop offset="0" stop-color="#fde7a6"/><stop offset="1" stop-color="#f9d977"/></linearGradient></defs>
<rect x="0" y="0" width="30.5" height="43" fill="url(#bk)"/>
<polygon points="0,0 10.7,8.7 10.7,50.8 0,43.2" fill="url(#fl)"/><polygon points="25.3,18.7 35.7,18.7 35.7,32.7 44.1,32.7 30.5,46.6 16.9,32.7 25.3,32.7" fill="#3c96e6"/></svg>
<div class="t" style="left:1342.50px;top:268.00px;font-size:15px;color:#000;letter-spacing:0.125px;">Downloads</div>
<svg style="left:1605px;top:264px" width="50" height="54" viewBox="0 0 50 54"><defs><linearGradient id="bk" x1="0" y1="0" x2="1" y2="0"><stop offset="0" stop-color="#e9c25a"/><stop offset="1" stop-color="#fbdc80"/></linearGradient>
<linearGradient id="fl" x1="0" y1="0" x2="1" y2="1"><stop offset="0" stop-color="#fde7a6"/><stop offset="1" stop-color="#f9d977"/></linearGradient></defs>
<rect x="0" y="0" width="30.5" height="43" fill="url(#bk)"/>
<polygon points="0,0 10.7,8.7 10.7,50.8 0,43.2" fill="url(#fl)"/><defs><linearGradient id="mu" x1="0" y1="0" x2="1" y2="1"><stop offset="0" stop-color="#12aaff"/><stop offset="1" stop-color="#0a80e8"/></linearGradient></defs>
<path d="M30.2,7.4 Q32,6.5 33,8 Q34,13 37.5,16.5 Q43.5,21.5 43,29 Q42.5,33 39.5,36.5 L38.5,35.5 Q41.5,31 40.5,26.5 Q39,21.5 33.1,19 V41.7 L30.2,41.7 Z" fill="#0a94f0"/>
<ellipse cx="25" cy="43" rx="8.8" ry="6" transform="rotate(-22 25 43)" fill="url(#mu)"/></svg>
<div class="t" style="left:1660.50px;top:268.00px;font-size:15px;color:#000;letter-spacing:-0.625px;">Music</div>
<svg style="left:333px;top:340px" width="50" height="54" viewBox="0 0 50 54"><defs><linearGradient id="bk" x1="0" y1="0" x2="1" y2="0"><stop offset="0" stop-color="#e9c25a"/><stop offset="1" stop-color="#fbdc80"/></linearGradient>
<linearGradient id="fl" x1="0" y1="0" x2="1" y2="1"><stop offset="0" stop-color="#fde7a6"/><stop offset="1" stop-color="#f9d977"/></linearGradient></defs>
<rect x="0" y="0" width="30.5" height="43" fill="url(#bk)"/>
<polygon points="0,0 10.7,8.7 10.7,50.8 0,43.2" fill="url(#fl)"/><defs><linearGradient id="sk" x1="0" y1="0" x2="0" y2="1"><stop offset="0" stop-color="#5d9cf0"/><stop offset="1" stop-color="#dff0ff"/></linearGradient>
<linearGradient id="wt" x1="0" y1="0" x2="1" y2="0"><stop offset="0" stop-color="#3d70a8"/><stop offset="1" stop-color="#a8c4d8"/></linearGradient></defs>
<rect x="14.4" y="23.3" width="31.4" height="23.3" fill="#f0f0f0" stroke="#dcdcdc" stroke-width="0.6"/>
<rect x="15.5" y="24.5" width="29" height="21" fill="url(#sk)"/>
<path d="M15.5,30.5 Q22,26.5 28,33 Q34,37 44.5,38 V39 H15.5 Z" fill="#3d7a4e"/>
<rect x="15.5" y="39" width="29" height="6.5" fill="url(#wt)"/></svg>
<div class="t" style="left:388.75px;top:344.00px;font-size:15px;color:#000;letter-spacing:-0.357px;">Pictures</div>
<svg style="left:651px;top:340px" width="50" height="54" viewBox="0 0 50 54"><defs><linearGradient id="bk" x1="0" y1="0" x2="1" y2="0"><stop offset="0" stop-color="#e9c25a"/><stop offset="1" stop-color="#fbdc80"/></linearGradient>
<linearGradient id="fl" x1="0" y1="0" x2="1" y2="1"><stop offset="0" stop-color="#fde7a6"/><stop offset="1" stop-color="#f9d977"/></linearGradient></defs>
<rect x="0" y="0" width="30.5" height="43" fill="url(#bk)"/>
<polygon points="0,0 10.7,8.7 10.7,50.8 0,43.2" fill="url(#fl)"/><rect x="14" y="14.2" width="29.2" height="32.4" fill="#3a3a3a"/>
<rect x="15.5" y="15.5" width="3" height="30" fill="#f0e0a0"/><rect x="39.5" y="15.5" width="2.5" height="30" fill="#f0f0f0"/>
<path d="M16.2,17 V45 M40.7,17 V45" stroke="#3a3a3a" stroke-width="1" stroke-dasharray="1.5 2.5"/>
<rect x="19" y="15.5" width="19.5" height="14.5" fill="#3f7fd8"/><rect x="19" y="31" width="19.5" height="15" fill="#3f86e0"/>
<circle cx="33" cy="21.5" r="3.8" fill="#e8a018"/><path d="M31,21.5 H35" stroke="#d02020" stroke-width="1.5"/>
<path d="M19,30 L22,26 L26,28 L30,26 L38.5,27 V30 Z" fill="#1a8a3a"/>
<path d="M19,22 Q22,20 24,24 L24,30 L19,30 Z" fill="#c060c0"/>
<circle cx="33" cy="44" r="3" fill="#e8a018"/><path d="M30.5,34 Q33,31 36,34 L33,37 Z" fill="#d03020"/></svg>
<div class="t" style="left:706.50px;top:344.00px;font-size:15px;color:#000;letter-spacing:-0.200px;">Videos</div>
<svg style="left:265px;top:415.3px" width="12" height="8" viewBox="0 0 12 8"><path d="M1,1.5 L6,6.5 L11,1.5" fill="none" stroke="#8a8a8a" stroke-width="1.1"/></svg>
<div class="t" style="left:282.50px;top:409.00px;font-size:15px;color:#1e3287;letter-spacing:-0.262px;">Devices and drives (3)</div>
<div class="a" style="left:435px;top:418px;width:1476px;height:1px;background:#e5e5e5"></div>
<svg style="left:325px;top:468px" width="54" height="30" viewBox="0 0 54 30"><defs><linearGradient id="dtop" x1="0" y1="0" x2="0" y2="1"><stop offset="0" stop-color="#e8e8e8"/><stop offset="1" stop-color="#d0d0d0"/></linearGradient></defs>
<polygon points="0.5,11 30,0.5 52,8 52,16 22.5,26.5 0.5,19" fill="#c8c8c8"/>
<polygon points="0.5,11 30,0.5 52,8 22.5,18.5" fill="url(#dtop)"/>
<polygon points="0.5,11.5 22.5,19 22.5,26.5 0.5,19" fill="#2b2b2b"/>
<polygon points="2.5,14 21,20.5 21,23 2.5,16.8" fill="#4a4a4a"/>
<polygon points="22.5,19 52,8.5 52,16 22.5,26.5" fill="#b0b0b0"/>
<circle cx="18" cy="21.8" r="1" fill="#30d040"/></svg>
<svg style="left:325px;top:454px" width="23" height="23" viewBox="0 0 23 23"><g fill="#12b8f5"><polygon points="0,2.5 9.5,1.3 9.5,10.5 0,10.5"/><polygon points="11,1.1 22,0 22,10.5 11,10.5"/><polygon points="0,12 9.5,12 9.5,21 0,20"/><polygon points="11,12 22,12 22,22.2 11,21.1"/></g></svg>
<div class="t" style="left:388.75px;top:440.00px;font-size:15px;color:#000;letter-spacing:-0.500px;">Local Disk (C:)</div>
<div class="a" style="left:387px;top:460px;width:194px;height:18px;background:#e6e6e6;border:1px solid #bcbcbc"></div>
<div class="a" style="left:388px;top:461px;width:165px;height:16px;background:#26a0da"></div>
<div class="t" style="left:389.50px;top:481.00px;font-size:15px;color:#6d6d6d;letter-spacing:-0.477px;">11.7 GB free of 84.6 GB</div>
<svg style="left:643px;top:468px" width="54" height="30" viewBox="0 0 54 30"><defs><linearGradient id="dtop" x1="0" y1="0" x2="0" y2="1"><stop offset="0" stop-color="#e8e8e8"/><stop offset="1" stop-color="#d0d0d0"/></linearGradient></defs>
<polygon points="0.5,11 30,0.5 52,8 52,16 22.5,26.5 0.5,19" fill="#c8c8c8"/>
<polygon points="0.5,11 30,0.5 52,8 22.5,18.5" fill="url(#dtop)"/>
<polygon points="0.5,11.5 22.5,19 22.5,26.5 0.5,19" fill="#2b2b2b"/>
<polygon points="2.5,14 21,20.5 21,23 2.5,16.8" fill="#4a4a4a"/>
<polygon points="22.5,19 52,8.5 52,16 22.5,26.5" fill="#b0b0b0"/>
<circle cx="18" cy="21.8" r="1" fill="#30d040"/></svg>
<div class="t" style="left:706.50px;top:440.00px;font-size:15px;color:#000;letter-spacing:-0.393px;">Local Disk (D:)</div>
<div class="a" style="left:705px;top:460px;width:194px;height:18px;background:#e6e6e6;border:1px solid #bcbcbc"></div>
<div class="a" style="left:706px;top:461px;width:161px;height:16px;background:#26a0da"></div>
<div class="t" style="left:707.50px;top:481.00px;font-size:15px;color:#6d6d6d;letter-spacing:-0.452px;">24.2 GB free of 153 GB</div>
<svg style="left:962px;top:469px" width="54" height="30" viewBox="0 0 54 30"><defs><linearGradient id="dtop" x1="0" y1="0" x2="0" y2="1"><stop offset="0" stop-color="#e8e8e8"/><stop offset="1" stop-color="#d0d0d0"/></linearGradient></defs>
<polygon points="0.5,11 30,0.5 52,8 52,16 22.5,26.5 0.5,19" fill="#c8c8c8"/>
<polygon points="0.5,11 30,0.5 52,8 22.5,18.5" fill="url(#dtop)"/>
<polygon points="0.5,11.5 22.5,19 22.5,26.5 0.5,19" fill="#2b2b2b"/>
<polygon points="2.5,14 21,20.5 21,23 2.5,16.8" fill="#4a4a4a"/>
<polygon points="22.5,19 52,8.5 52,16 22.5,26.5" fill="#b0b0b0"/>
<circle cx="18" cy="21.8" r="1" fill="#30d040"/></svg>
<svg style="left:961px;top:444px" width="56" height="54" viewBox="0 0 56 54"><defs><radialGradient id="cd"><stop offset="0" stop-color="#f5f5f5"/><stop offset="1" stop-color="#cfd6d6"/></radialGradient></defs>
<circle cx="37" cy="17" r="15" fill="url(#cd)" stroke="#c8cccc" stroke-width="0.5"/>
<circle cx="37" cy="17" r="3.5" fill="#e8e8e8" stroke="#bbb" stroke-width="0.6"/>
<path d="M39,13 L47,8" stroke="#a0e8a0" stroke-width="0.6"/><path d="M35,19 L27,22" stroke="#e8a0e8" stroke-width="0.6"/>
<rect x="22" y="21" width="30" height="14" rx="2.5" fill="#1e1e1e"/>
<text x="37" y="32.5" font-family="Liberation Sans" font-size="12.5" fill="#fff" text-anchor="middle" letter-spacing="-0.3">DVD</text></svg>
<div class="t" style="left:1025.00px;top:449.00px;font-size:15px;color:#000;letter-spacing:-0.481px;">DVD RW Drive (E:)</div>
<div class="t" style="left:17.80px;top:1007.00px;font-size:15px;color:#1e1e1e;letter-spacing:-0.229px;">10 items</div>
<div class="a" style="left:85px;top:1009px;width:1px;height:13px;background:#f0f0f0"></div>
<svg style="left:1864px;top:1007px" width="20" height="17" viewBox="0 0 20 17"><rect x="0.5" y="0.5" width="5" height="15" fill="#fff" stroke="#9a9a9a" stroke-width="1"/>
<path d="M0.5,5.5 H5.5 M0.5,10.5 H5.5" stroke="#9a9a9a" stroke-width="1"/>
<rect x="2" y="2" width="2" height="2" fill="#3a7a6a"/><rect x="2" y="7" width="2" height="2" fill="#60a040"/><rect x="2" y="12" width="2" height="2" fill="#c02010"/>
<path d="M7,2.5 H12 M13,2.5 H18 M7,7.5 H12 M13,7.5 H18 M7,12.5 H12 M13,12.5 H18" stroke="#555" stroke-width="1"/></svg>
<svg style="left:1892px;top:1008px" width="19" height="15" viewBox="0 0 19 15"><rect x="0.5" y="0.5" width="17" height="13" fill="#fff" stroke="#9a9a9a" stroke-width="1"/>
<defs><linearGradient id="vsk" x1="0" y1="0" x2="0" y2="1"><stop offset="0" stop-color="#5a9cf0"/><stop offset="1" stop-color="#e0f0ff"/></linearGradient></defs>
<rect x="2" y="2" width="14" height="10" fill="url(#vsk)"/><path d="M2,5 Q6,5 9,7.5 L16,8.5 V12 H2 Z" fill="#3d7a4e"/><rect x="2" y="9.5" width="14" height="2.5" fill="#4a78b0"/></svg>
<div class="a" style="left:0px;top:1030px;width:1920px;height:50px;background:#0c0c0c"></div>
<svg style="left:20px;top:1044px" width="21" height="22" viewBox="0 0 21 22"><g fill="#fff"><polygon points="0,2.8 8.6,1.6 8.6,9.8 0,9.8"/><polygon points="9.8,1.4 20.2,0 20.2,9.8 9.8,9.8"/><polygon points="0,11 8.6,11 8.6,19.4 0,18.2"/><polygon points="9.8,11 20.2,11 20.2,21 9.8,19.6"/></g></svg>
<svg style="left:79px;top:1043px" width="22" height="23" viewBox="0 0 22 23"><circle cx="14" cy="8.75" r="6.8" fill="none" stroke="#fff" stroke-width="1.5"/><path d="M9.2,13.6 L1.5,21.5" stroke="#fff" stroke-width="1.6"/></svg>
<svg style="left:139px;top:1044px" width="22" height="22" viewBox="0 0 22 22"><path d="M1.5,0 V3.5 H11.5 V0 M1.5,21 V17.5 H11.5 V21" fill="none" stroke="#fff" stroke-width="1"/><rect x="1.5" y="6.5" width="10" height="8" fill="none" stroke="#fff" stroke-width="1"/><path d="M19.5,0 V21" stroke="#fff" stroke-width="1"/><rect x="18" y="7" width="3" height="3" fill="#fff"/></svg>
<svg style="left:198px;top:1039px" width="31" height="31" viewBox="0 0 31 31"><path d="M11,9 V5.5 Q11,1.5 15,1.5 Q19,1.5 19,5.5 V9 M13,9 V6 Q13,3.5 15.5,3.5 Q18,3.5 18,6 V9" fill="none" stroke="#e8e8e8" stroke-width="1.3"/>
<rect x="0.8" y="8" width="29.2" height="22" rx="1.5" fill="#fff"/>
<rect x="8.9" y="13" width="6" height="6" fill="#f35325"/><rect x="15.5" y="13" width="6" height="6" fill="#81bc06"/>
<rect x="8.9" y="19.6" width="6" height="5.6" fill="#05a6f0"/><rect x="15.5" y="19.6" width="6" height="5.6" fill="#ffba08"/></svg>
<svg style="left:258px;top:1036px" width="38" height="38" viewBox="0 0 38 38"><path fill="#0a7bd9" fill-rule="evenodd" d="M5.5,17.8 C8,10 13,6 18.5,6 C25.5,6 30,11 30,18 V22.5 H14 C14.5,25.8 17,27.3 20.5,27.3 C23.5,27.3 26,26.5 28.2,25.2 V31 C25.5,32.5 22.5,33 19.5,33 C12,33 8.3,28 8.3,22.5 C8.3,19.5 9.5,17 11.5,15 C9.5,15.8 7.3,16.8 5.5,17.8 Z
M11.5,15 C13.5,12.8 15.8,11.6 18,11.6 C20.5,11.6 22.2,13.5 22.2,16.5 H14 C14,15.8 14.3,15 14.8,14.3 C13.5,14.3 12.5,14.5 11.5,15 Z"/></svg>
<svg style="left:322px;top:1041px" width="46" height="38" viewBox="0 0 46 38"><polygon points="1,9.1 16,1.1 30.8,9.1 30.8,25 1,25" fill="#fff"/>
<polygon points="1.9,9.4 30,9.4 25.8,21" fill="#0c0c0c"/>
<rect x="19.4" y="13.4" width="24.7" height="19.9" rx="9.95" fill="rgba(50,50,50,0.6)" stroke="#707070" stroke-width="0.9"/>
<text x="31.6" y="28.5" font-family="Liberation Sans" font-weight="bold" font-size="14.5" fill="#fff" text-anchor="middle" letter-spacing="-0.3">47</text></svg>
<svg style="left:386px;top:1041px" width="28" height="28" viewBox="0 0 28 28"><circle cx="14" cy="14" r="13.8" fill="#db4437"/>
<path d="M14.00,7.90 L26.38,7.90 A13.8,13.8 0 0 1 13.09,27.77 L19.28,17.05 L14,14 Z" fill="#fcc934"/><path d="M19.28,17.05 L13.09,27.77 A13.8,13.8 0 0 1 2.53,6.33 L8.72,17.05 L14,14 Z" fill="#1e9e55"/>
<circle cx="14" cy="14" r="6.1" fill="#fff"/><circle cx="14" cy="14" r="5.1" fill="#4285f4"/></svg>
<div class="a" style="left:375px;top:1077px;width:51px;height:3px;background:#76b9ed"></div>
<svg style="left:447px;top:1040px" width="30" height="30" viewBox="0 0 30 30"><rect x="0" y="0" width="30" height="30" rx="2.5" fill="#3f3f3f"/>
<polygon points="22.5,5 22.5,11.5 9.5,16 9.5,9.5" fill="#ff9800"/>
<polygon points="9.5,12.5 22.5,17 22.5,20.5 9.5,16" fill="#d87a00"/>
<polygon points="22.5,14 22.5,20.5 9.5,25 9.5,18.5" fill="#ff9800"/></svg>
<div class="a" style="left:494px;top:1030px;width:61px;height:50px;background:#3d3d3d"></div>
<div class="a" style="left:494px;top:1077px;width:61px;height:3px;background:#76b9ed"></div>
<svg style="left:509px;top:1042px" width="29" height="25" viewBox="0 0 29 25"><path d="M0.5,2 Q0.5,0.5 2,0.5 H9.5 L12,2.5 H27 Q28.5,2.5 28.5,4 V23 Q28.5,24.5 27,24.5 H2 Q0.5,24.5 0.5,23 Z" fill="#ffe288"/>
<rect x="2.5" y="2.5" width="8" height="1.8" fill="#fff"/><rect x="2.5" y="2.7" width="1.5" height="1.4" fill="#3aa0f0"/>
<path d="M7,24.5 V14.5 Q7,12.5 9,12.5 H20 Q22,12.5 22,14.5 V24.5 H18 V17 H11 V24.5 Z" fill="#1da1f2"/></svg>
<svg style="left:571px;top:1040px" width="30" height="30" viewBox="0 0 30 30"><defs><linearGradient id="dv" x1="0" y1="0" x2="0" y2="1"><stop offset="0" stop-color="#2a3fa8"/><stop offset="0.5" stop-color="#1a60c8"/><stop offset="1" stop-color="#1a58b0"/></linearGradient></defs>
<rect x="0.5" y="0.5" width="29" height="29" fill="url(#dv)"/>
<text x="15" y="13.5" font-family="Liberation Sans" font-weight="bold" font-size="11" fill="#fff" text-anchor="middle">DEV</text>
<text x="15" y="26.5" font-family="Liberation Sans" font-weight="bold" font-size="13" fill="#0a3a98" text-anchor="middle" letter-spacing="-1">C++</text></svg>
<svg style="left:628px;top:1036px" width="40" height="40" viewBox="0 0 40 40"><defs><linearGradient id="np1" x1="0" y1="0" x2="0.3" y2="1"><stop offset="0" stop-color="#e8f6fa"/><stop offset="0.35" stop-color="#a6d6e4"/><stop offset="1" stop-color="#4aaac8"/></linearGradient>
<linearGradient id="np2" x1="0" y1="0" x2="1" y2="0"><stop offset="0" stop-color="#4ab0c8"/><stop offset="0.7" stop-color="#0e5a6a"/><stop offset="1" stop-color="#b8d8e0"/></linearGradient></defs>
<polygon points="31,9 33,10 32.5,28 30.5,28" fill="#b08a30"/>
<polygon points="15.5,5.5 31,9 30.5,29 26,31 6,24.5" fill="#dfe8ea"/>
<polygon points="15.5,8 30.5,10 22,28.8 6.3,24" fill="url(#np1)"/>
<polygon points="6.3,24 14,12 13,26.2" fill="url(#np2)" opacity="0.85"/>
<polygon points="30.5,10 30.3,28.5 26,30.6 22,28.8" fill="#e8eef0"/>
<path d="M16,6.3 L30.5,9.4" stroke="#8a9090" stroke-width="1.3" stroke-dasharray="1.2 1"/></svg>
<div class="a" style="left:623px;top:1077px;width:40px;height:3px;background:#76b9ed"></div>
<div class="a" style="left:663px;top:1077px;width:11px;height:3px;background:#5b8fb8"></div>
<svg style="left:694px;top:1041px" width="32" height="28" viewBox="0 0 32 28"><circle cx="15" cy="14" r="14" fill="#f7941e"/>
<circle cx="17.2" cy="14" r="13.2" fill="#0c0c0c"/>
<circle cx="17.8" cy="14" r="12.6" fill="#2c2255"/>
<circle cx="17.8" cy="14" r="11.3" fill="#3a2d78"/>
<path d="M5.8,10.8 H29.8 M5.3,14 H30.3 M5.8,17.2 H29.8" stroke="#fff" stroke-width="1.6"/></svg>
<div class="a" style="left:685px;top:1077px;width:51px;height:3px;background:#76b9ed"></div>
<svg style="left:1610px;top:1045px" width="20" height="20" viewBox="0 0 20 20"><circle cx="13" cy="4.5" r="3.4" fill="none" stroke="#fff" stroke-width="1.3"/><path d="M8,12.5 Q9,8.5 13,8.5 Q17.5,8.5 18.5,12.5" fill="none" stroke="#fff" stroke-width="1.3"/>
<circle cx="7" cy="11" r="3.4" fill="none" stroke="#fff" stroke-width="1.3"/><path d="M1,18.5 Q2,15 7,15 Q12,15 13,18.5" fill="none" stroke="#fff" stroke-width="1.3"/></svg>
<svg style="left:1656px;top:1050px" width="18" height="10" viewBox="0 0 18 10"><path d="M1,8.5 L8.5,1.2 L16,8.5" fill="none" stroke="#fff" stroke-width="1.2"/></svg>
<svg style="left:1684px;top:1047px" width="23" height="15" viewBox="0 0 23 15"><rect x="5" y="5" width="14.5" height="8" fill="none" stroke="#fff" stroke-width="1.2"/><rect x="19.5" y="7" width="1.5" height="4" fill="#fff"/>
<rect x="6.5" y="6.5" width="11.5" height="5" fill="#fff"/><path d="M2.5,1 V3.5 M5,1 V3.5 M1.5,3.5 H6 V6 Q6,8 3.8,8 Q1.5,8 1.5,6 Z M3.8,8 V13" fill="none" stroke="#fff" stroke-width="1.1"/></svg>
<svg style="left:1717px;top:1047px" width="18" height="17" viewBox="0 0 18 17"><path d="M1,15.5 Q1,2 15,1.5 M4,15.5 Q4,5 15,4.5 M7,15.5 Q7,8 15,7.5 M10,15.5 Q10,11 15,10.5" fill="none" stroke="#fff" stroke-width="1.1"/><circle cx="14" cy="14.5" r="1.5" fill="#fff"/></svg>
<svg style="left:1745px;top:1046px" width="21" height="19" viewBox="0 0 21 19"><path d="M1,6 H4.5 L10,1.5 V17 L4.5,12.5 H1 Z" fill="none" stroke="#fff" stroke-width="1.1"/>
<path d="M12.3,7 Q13.8,9.2 12.3,11.5 M14.5,4.5 Q17.5,9.2 14.5,14 M16.8,2 Q21,9.2 16.8,16.5" fill="none" stroke="#fff" stroke-width="1.1"/></svg>
<div class="t" style="left:1786.70px;top:1036.00px;font-size:14.5px;color:#fff;letter-spacing:-0.533px;">3:06 PM</div>
<div class="t" style="left:1778.70px;top:1059.00px;font-size:14.5px;color:#fff;letter-spacing:0.262px;">3/26/2019</div>
<svg style="left:1868px;top:1044px" width="34" height="34" viewBox="0 0 34 34"><rect x="1" y="0.8" width="20.2" height="17.3" fill="#fff"/>
<path d="M5,5.5 H17.1 M5,9.6 H17.1 M5,13.4 H17.1" stroke="#0c0c0c" stroke-width="1.1"/>
<circle cx="20.6" cy="20.5" r="11.2" fill="rgba(50,50,50,0.6)" stroke="#808080" stroke-width="0.9"/>
<text x="20.6" y="26.2" font-family="Liberation Sans" font-weight="bold" font-size="15.5" fill="#fff" text-anchor="middle" letter-spacing="-0.6">21</text></svg>
<div class="a" style="left:1914px;top:1030px;width:1px;height:50px;background:#444"></div>
</body></html>
